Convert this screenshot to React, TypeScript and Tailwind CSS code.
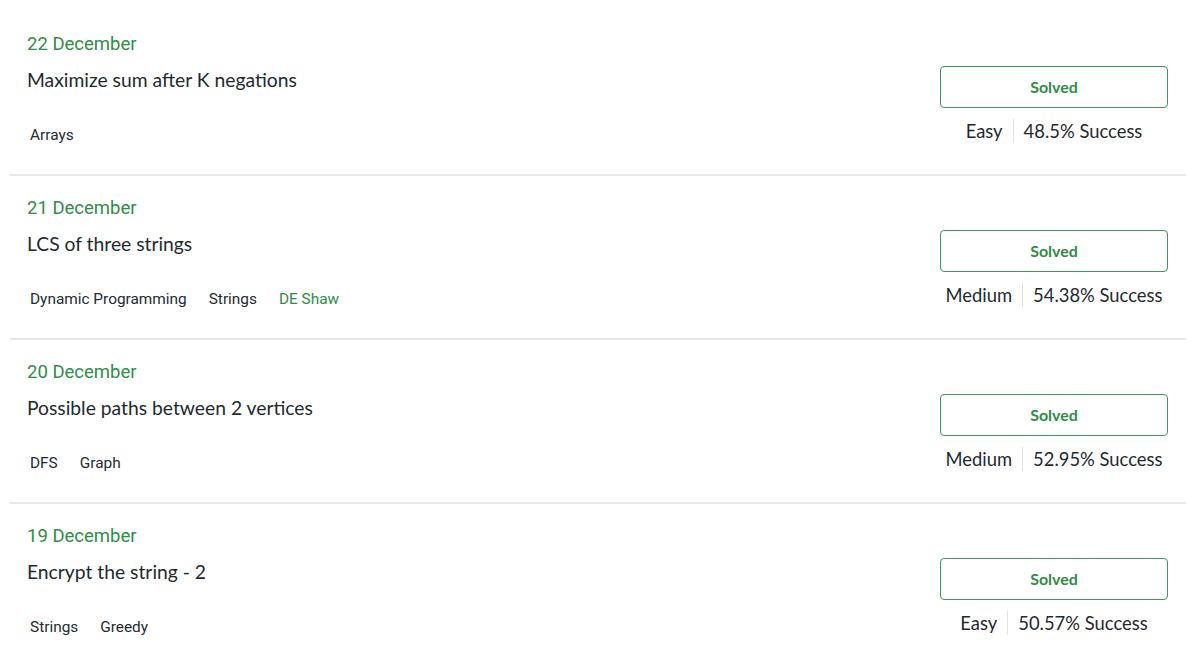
import clsx from "clsx";

type Problem = {
  date: string;
  title: string;
  tags: { label: string; company?: boolean }[];
  level: "Easy" | "Medium";
  success: string;
};

const problems: Problem[] = [
  { date: "22 December", title: "Maximize sum after K negations", tags: [{ label: "Arrays" }], level: "Easy", success: "48.5%" },
  {
    date: "21 December",
    title: "LCS of three strings",
    tags: [{ label: "Dynamic Programming" }, { label: "Strings" }, { label: "DE Shaw", company: true }],
    level: "Medium",
    success: "54.38%",
  },
  { date: "20 December", title: "Possible paths between 2 vertices", tags: [{ label: "DFS" }, { label: "Graph" }], level: "Medium", success: "52.95%" },
  { date: "19 December", title: "Encrypt the string - 2", tags: [{ label: "Strings" }, { label: "Greedy" }], level: "Easy", success: "50.57%" },
];

function ProblemRow({ p }: { p: Problem }) {
  return (
    <div className="ml-[10px] mr-[14px] flex h-[164px] border-b-2 border-[#e7e7e7]">
      <div className="flex-1 pl-[17px] pt-[20px]">
        <div className="h-6 text-[18.5px] leading-6 text-[#2f8d46] [font-family:Roboto,sans-serif]">{p.date}</div>
        <div className="mt-[10px] h-7 text-[19.3px] leading-7 text-[#1e2a31] [font-family:Lato,sans-serif]">{p.title}</div>
        <div className="mt-[30px] ml-[3px] flex h-[22px] gap-[22px] text-[15.4px] leading-[22px] [font-family:Roboto,sans-serif]">
          {p.tags.map((t) => (
            <span key={t.label} className={clsx(t.company ? "text-[#2f8d46]" : "text-[#222c33]")}>
              {t.label}
            </span>
          ))}
        </div>
      </div>
      <div className="mr-[18px] flex w-[228px] flex-col items-center pt-[54px]">
        <button className="h-[42px] w-full rounded-[4px] border border-[#3a9a5a] bg-white text-[16px] font-bold text-[#2f8d46] [font-family:Lato,sans-serif]">
          Solved
        </button>
        <div className="mt-[11px] flex h-6 items-center text-[18.4px] leading-6 text-[#1e2a31] [font-family:Lato,sans-serif]">
          <span className="pr-[10px]">{p.level}</span>
          <span className="h-6 w-px bg-[#e2e2e2]" />
          <span className="pl-[10px]">{p.success} Success</span>
        </div>
      </div>
    </div>
  );
}

export default function App() {
  return (
    <div className="min-h-screen bg-white pt-[12px]">
      {problems.map((p) => (
        <ProblemRow key={p.date} p={p} />
      ))}
    </div>
  );
}
